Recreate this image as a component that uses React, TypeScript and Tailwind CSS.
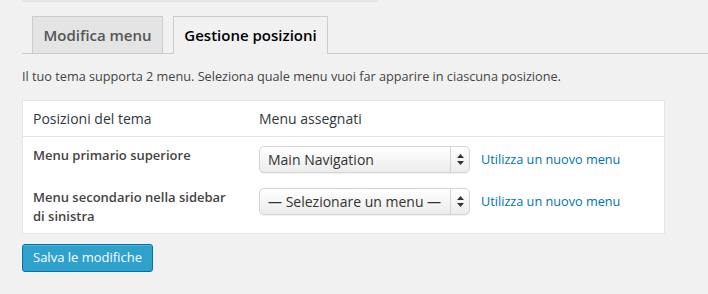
const rows = [
  { label: "Menu primario superiore", value: "Main Navigation" },
  { label: "Menu secondario nella sidebar di sinistra", value: "— Selezionare un menu —" },
];

function FakeSelect({ value }: { value: string }) {
  return (
    <div className="flex h-[27px] w-[211px] items-stretch rounded-[5px] border border-[#d4d4d4] bg-gradient-to-b from-white to-[#ececec] shadow-[0_1px_1px_rgba(0,0,0,0.06)]">
      <span className="flex flex-1 items-center overflow-hidden whitespace-nowrap pl-[8px] text-[14px] text-[#333]">
        {value}
      </span>
      <span className="flex w-[19px] items-center justify-center border-l border-[#d4d4d4]">
        <svg width="7" height="11" viewBox="0 0 7 11" fill="#333">
          <path d="M3.5 0 L7 4 L0 4 Z" />
          <path d="M0 7 L7 7 L3.5 11 Z" />
        </svg>
      </span>
    </div>
  );
}

export default function App() {
  return (
    <div className="h-[294px] w-[708px] overflow-hidden bg-[#f1f1f1] font-['Open_Sans',sans-serif] text-[#444]">
      <div className="ml-[22px] h-[2px] w-[356px] bg-[#e4e4e4]" />

      {/* Tabs */}
      <div className="ml-[22px] mt-[15px] flex h-[37px] items-end gap-[10px] border-b border-[#ccc] pl-[10px]">
        <div className="-mb-px flex h-[38px] w-[131px] items-center justify-center border border-[#ccc] bg-[#e4e4e4] text-[15px] font-semibold text-[#555]">
          Modifica menu
        </div>
        <div className="-mb-px flex h-[38px] w-[155px] items-center justify-center border border-b-0 border-[#ccc] bg-[#f1f1f1] text-[15px] font-semibold text-black">
          Gestione posizioni
        </div>
      </div>

      <p className="ml-[22px] mt-[13px] text-[12.7px] leading-[18px] text-[#444]">
        Il tuo tema supporta 2 menu. Seleziona quale menu vuoi far apparire in ciascuna posizione.
      </p>

      {/* Table */}
      <div className="ml-[22px] mt-[15px] w-[643px] border border-[#e5e5e5] bg-white">
        <div className="flex h-[36px] items-center border-b border-[#e5e5e5] text-[14px] text-[#32373c]">
          <div className="w-[236px] pl-[10px]">Posizioni del tema</div>
          <div>Menu assegnati</div>
        </div>
        <div className="pb-[7px]">
          {rows.map((r, i) => (
            <div key={i} className={`flex ${i === 0 ? "pt-[9px]" : "pt-[15px]"}`}>
              <div className="w-[236px] pl-[10px] pr-[30px] text-[13px] font-semibold leading-[19px] text-[#444]">
                {r.label}
              </div>
              <div className="flex items-start">
                <FakeSelect value={r.value} />
                <a className="ml-[11px] mt-[4px] text-[12.7px] text-[#0073aa]">Utilizza un nuovo menu</a>
              </div>
            </div>
          ))}
        </div>
      </div>

      <button className="ml-[22px] mt-[10px] h-[28px] rounded-[3px] border border-[#0074a2] bg-[#2ea2cc] px-[10px] text-[13px] text-white shadow-[inset_0_1px_0_rgba(120,200,230,0.5)]">
        Salva le modifiche
      </button>
    </div>
  );
}
